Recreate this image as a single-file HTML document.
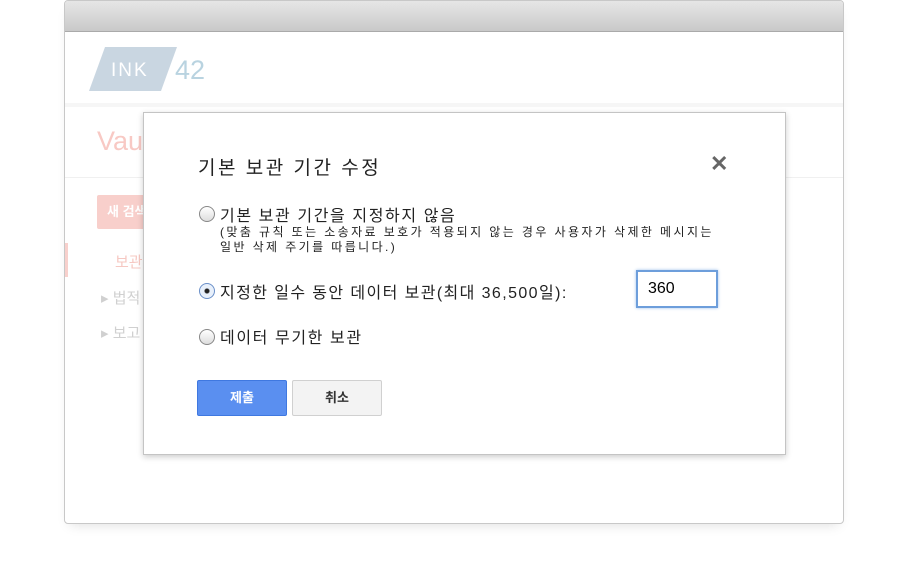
<!DOCTYPE html>
<html><head><meta charset="utf-8"><style>
body{margin:0;width:920px;height:578px;background:#fff;position:relative;overflow:hidden;font-family:"Liberation Sans","Noto Sans CJK KR","NanumGothic",sans-serif}
.win{position:absolute;left:64px;top:0;width:778px;height:522px;border:1px solid #c8c8c8;border-radius:4px;background:#fff;box-shadow:0 6px 12px -6px rgba(0,0,0,.15);overflow:hidden}
.bar{height:30px;background:linear-gradient(#e6e6e6,#c9c9c9);border-bottom:1px solid #aaa}
.logo{position:absolute;left:32px;top:46px;width:72px;height:44px;background:#c9d6e1;transform:skewX(-20deg)}
.ink{position:absolute;left:46px;top:59px;color:#fff;font-size:19px;letter-spacing:2px}
.n42{position:absolute;left:110px;top:54px;color:#b9d3e0;font-size:27px}
.hdr{position:absolute;left:0;top:102px;width:100%;height:4px;background:#f6f6f6}
.vau{position:absolute;left:32px;top:125px;color:#f8c9c4;font-size:27px}
.line{position:absolute;left:0;top:176px;width:100%;height:1px;background:#f0f0f0}
.btnr{position:absolute;left:32px;top:194px;width:60px;height:34px;background:#f8cfcb;border-radius:2px;color:#fff;font-size:13px;font-weight:bold;line-height:34px;padding-left:10px}
.side{position:absolute;left:0;top:242px;width:3px;height:34px;background:#f8d0cc}
.s{position:absolute;color:#d0d0d0;font-size:15px}
.dlg{position:absolute;left:143px;top:112px;width:641px;height:341px;background:#fff;border:1px solid #c4c4c4;box-shadow:0 2px 6px rgba(0,0,0,.2)}
.t{position:absolute;font-size:19px;color:#222;left:54px;top:40px;letter-spacing:2.5px}
.x{position:absolute;left:566px;top:38px;font-size:22px;color:#666;font-weight:bold}
.r{position:absolute;width:14px;height:14px;border:1px solid #888;border-radius:50%;background:linear-gradient(#fff,#ddd)}
.l{position:absolute;font-size:16px;color:#222;letter-spacing:1.6px}
.sm{position:absolute;font-size:12px;color:#222;line-height:15px;left:76px;top:112px;letter-spacing:2.4px}
.inp{position:absolute;left:492px;top:157px;border:2px solid #6d9edb;box-shadow:0 0 3px #9ec0ea;font-size:16px;line-height:34px;padding-left:10px;box-sizing:border-box;width:82px;height:38px}
.b1{position:absolute;left:53px;top:267px;width:88px;height:34px;background:#5a8ff0;border:1px solid #3f78e0;border-radius:2px;color:#fff;font-weight:bold;font-size:13px;text-align:center;line-height:34px}
.b2{position:absolute;left:148px;top:267px;width:88px;height:34px;background:#f3f3f3;border:1px solid #d0d0d0;border-radius:2px;color:#333;font-weight:bold;font-size:13px;text-align:center;line-height:34px}
</style></head><body>
<div class="win">
<div class="bar"></div>
<div class="logo"></div><div class="ink">INK</div><div class="n42">42</div>
<div class="hdr"></div>
<div class="vau">Vau</div>
<div class="line"></div>
<div class="btnr">새 검색</div>
<div class="side"></div>
<div class="s" style="left:50px;top:250px;color:#f6c8c2">보관</div>
<div class="s" style="left:36px;top:286px">▸ 법적</div>
<div class="s" style="left:36px;top:321px">▸ 보고</div>
</div>
<div class="dlg">
<div class="t">기본 보관 기간 수정</div>
<div class="x">✕</div>
<div class="r" style="left:55px;top:93px"></div>
<div class="l" style="left:76px;top:89px">기본 보관 기간을 지정하지 않음</div>
<div class="sm">(맞춤 규칙 또는 소송자료 보호가 적용되지 않는 경우 사용자가 삭제한 메시지는<br>일반 삭제 주기를 따릅니다.)</div>
<div class="r" style="left:55px;top:170px;border-color:#6a8fc8;background:radial-gradient(circle,#222 0 2px,#e8f0fb 3px)"></div>
<div class="l" style="left:76px;top:166px;letter-spacing:1.4px">지정한 일수 동안 데이터 보관(최대 36,500일):</div>
<div class="inp">360</div>
<div class="r" style="left:55px;top:216px"></div>
<div class="l" style="left:76px;top:211px">데이터 무기한 보관</div>
<div class="b1">제출</div>
<div class="b2">취소</div>
</div>
</body></html>
